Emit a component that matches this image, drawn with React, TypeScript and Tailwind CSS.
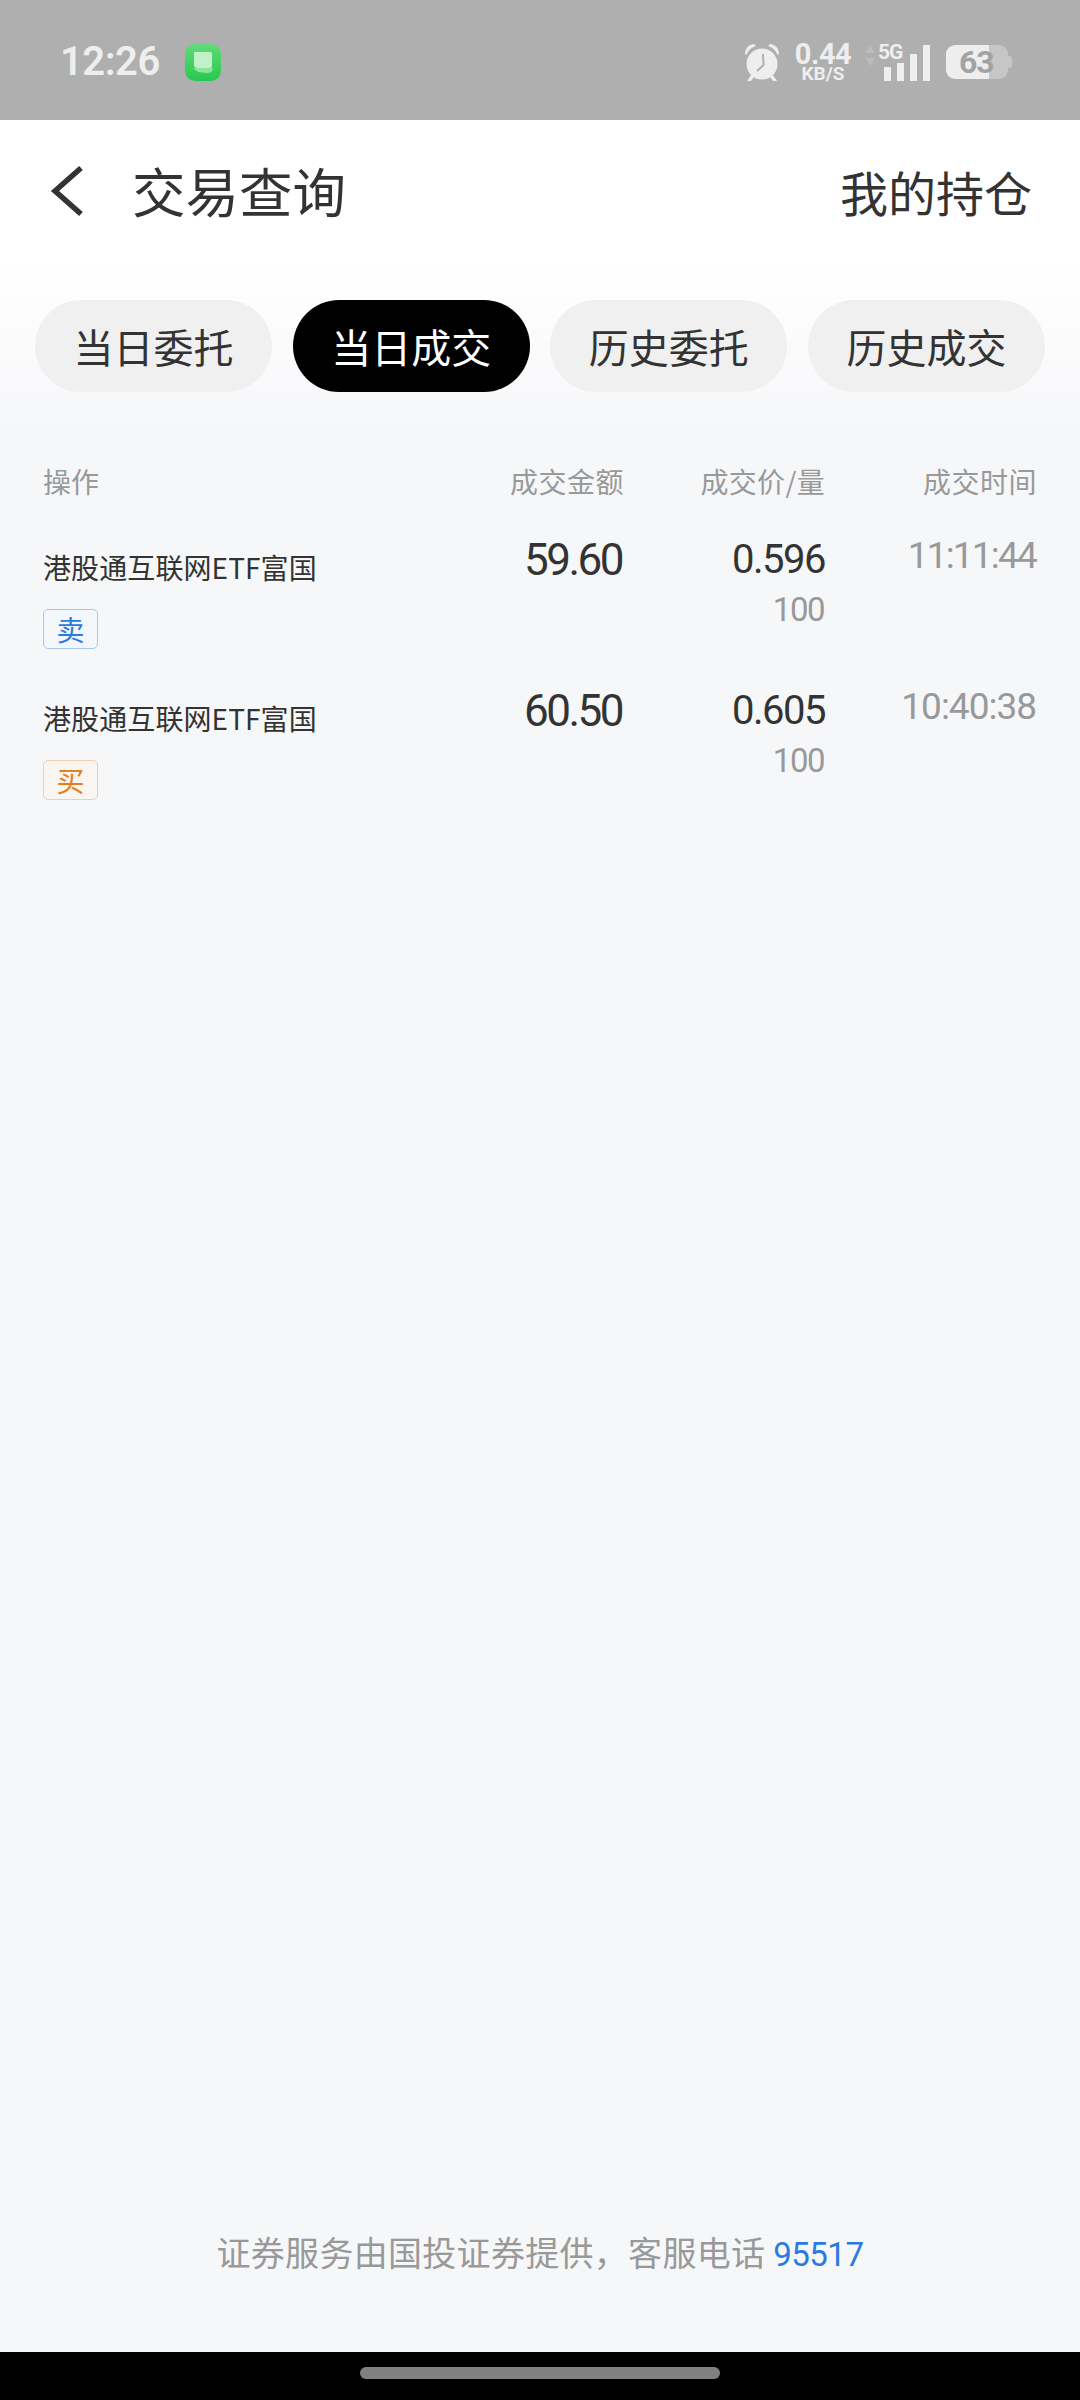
const cjk = { fontFamily: '"Noto Sans CJK SC", "Noto Sans", sans-serif' };
const num = { fontFamily: 'Roboto, "Liberation Sans", sans-serif' };

function Alarm() {
  return (
    <svg width="38" height="39" viewBox="0 0 38 39" className="shrink-0">
      <circle cx="19" cy="21" r="15.5" fill="#eeeeee" />
      <path d="M2 11 C2 5 6 1.500 11 1 L13 3 C8 4.500 5 8 3.500 12 Z" fill="#eeeeee" />
      <path d="M36 11 C36 5 32 1.500 27 1 L25 3 C30 4.500 33 8 34.500 12 Z" fill="#eeeeee" />
      <path d="M8 32 L4 38 H8 L11 34 Z M30 32 L34 38 H30 L27 34 Z" fill="#eeeeee" />
      <path d="M20 11 L20.500 22 L14 28" fill="none" stroke="#afafaf" strokeWidth="2" />
    </svg>
  );
}

function Signal() {
  return (
    <div className="relative w-[66px] h-[38px] shrink-0">
      <svg width="12" height="20" viewBox="0 0 12 20" className="absolute left-0 top-[3px]">
        <path d="M6 0 L11 7 H1 Z M6 20 L11 12 H1 Z" fill="#bcbcbc" />
      </svg>
      <span className="absolute left-[14px] top-[-3px] text-[21px] leading-[24px] font-bold text-[#eeeeee] tracking-[-1px]" style={num}>5G</span>
      <div className="absolute left-[20px] bottom-0 flex items-end gap-[6px]">
        <div className="w-[7px] h-[14px] bg-[#eeeeee]" />
        <div className="w-[7px] h-[18px] bg-[#eeeeee]" />
        <div className="w-[7px] h-[27px] bg-[#eeeeee]" />
        <div className="w-[7px] h-[36px] bg-[#eeeeee]" />
      </div>
    </div>
  );
}

function Battery() {
  return (
    <div className="relative w-[66px] h-[34px] shrink-0 flex">
      <div className="w-[43px] h-full bg-[#eeeeee] rounded-l-[9px]" />
      <div className="w-[19px] h-full bg-[#c6c6c6] rounded-r-[9px]" />
      <div className="w-[4px] h-[12px] self-center bg-[#c6c6c6] rounded-r-[3px]" />
      <span className="absolute left-[13px] top-0 text-[32px] leading-[34px] font-bold text-[#a3a3a3] tracking-[-1px]" style={num}>63</span>
    </div>
  );
}

function StatusBar() {
  return (
    <div className="h-[120px] bg-[#afafaf] flex items-center pl-[60px] pr-[68px] pt-[4px] shrink-0">
      <span className="text-[40px] leading-[48px] font-semibold text-[#eeeeee] tracking-[-0.5px]" style={num}>12:26</span>
      <svg width="36" height="37" viewBox="0 0 36 37" className="ml-[25px]">
        <defs>
          <linearGradient id="msg" x1="0" y1="0" x2="0" y2="1">
            <stop offset="0" stopColor="#5fdc7a" />
            <stop offset="1" stopColor="#26c94c" />
          </linearGradient>
        </defs>
        <rect width="36" height="37" rx="10" fill="url(#msg)" />
        <path d="M9 8 H25 Q27 8 27 10 V22 Q27 24 25 24 H20 L13 24 Q9 24 9 21 Z" fill="#c4f0c8" />
        <path d="M8 24 L28 24 Q28 29 22 29 L13 28 Z" fill="#8be59c" />
      </svg>
      <div className="ml-auto flex items-center">
        <Alarm />
        <div className="ml-[12px] w-[60px] flex flex-col items-center text-[#eeeeee]" style={num}>
          <div className="text-[29px] leading-[23px] font-bold tracking-[-0.5px]">0.44</div>
          <div className="text-[19px] leading-[16px] font-bold">KB/S</div>
        </div>
        <div className="ml-[11px]"><Signal /></div>
        <div className="ml-[16px]"><Battery /></div>
      </div>
    </div>
  );
}

function Header() {
  return (
    <div className="h-[142px] bg-white flex items-center pl-[50px] pr-[48px] shrink-0" style={cjk}>
      <svg width="34" height="52" viewBox="0 0 34 52" className="shrink-0">
        <path d="M31 3 L5 26 L31 49" fill="none" stroke="#333333" strokeWidth="5.500" />
      </svg>
      <span className="ml-[48px] mb-[2px] text-[53.500px] leading-[64px] text-[#333333]">交易查询</span>
      <span className="ml-auto text-[48px] leading-[60px] text-[#333333]">我的持仓</span>
    </div>
  );
}

function Tab({ label, active }: { label: string; active?: boolean }) {
  return (
    <div className={active
      ? "w-[237px] h-[92px] rounded-[46px] bg-black text-white flex items-center justify-center text-[40px]"
      : "w-[237px] h-[92px] rounded-[46px] bg-[#f0f0f0] text-[#333333] flex items-center justify-center text-[40px]"}>
      {label}
    </div>
  );
}

function Row({ amount, price, time, timeClass, side }: { amount: string; price: string; time: string; timeClass: string; side: "sell" | "buy" }) {
  return (
    <div className="flex h-[151px] pl-[43px] pr-[43px]">
      <div className="flex-1 flex flex-col items-start">
        <div className="mt-[15px] text-[28px] leading-[40px] text-[#333333] tracking-[0.1px]" style={cjk}>港股通互联网ETF富国</div>
        <div
          className={side === "sell"
            ? "mt-[22px] w-[55px] h-[40px] rounded-[5px] border border-[#a8c8ee] bg-[#f3f7fc] text-[#2a7ae2] text-[28px] leading-[38px] text-center"
            : "mt-[22px] w-[55px] h-[40px] rounded-[5px] border border-[#f2cdb0] bg-[#f9f5f1] text-[#e67e22] text-[28px] leading-[38px] text-center"}
          style={cjk}
        >
          {side === "sell" ? "卖" : "买"}
        </div>
      </div>
      <div className="mt-[3px] mr-[1px] text-[44px] leading-[50px] text-[#333333] text-right tracking-[-2.500px]" style={num}>{amount}</div>
      <div className="w-[202px] text-right" style={num}>
        <div className="mt-[3px] text-[40px] leading-[50px] text-[#333333] tracking-[-1.500px]">{price}</div>
        <div className="mt-[5px] mr-[1px] text-[33px] leading-[40px] text-[#999999] tracking-[-1.500px]">100</div>
      </div>
      <div className={timeClass} style={num}>{time}</div>
    </div>
  );
}

export default function App() {
  return (
    <div className="w-[1080px] h-[2400px] flex flex-col bg-[#f6f7f9] overflow-hidden" style={cjk}>
      <StatusBar />
      <Header />
      <div className="h-[170px] pt-[38px] pl-[35px] pr-[35px] flex justify-between shrink-0 bg-gradient-to-b from-white to-[#f6f7f9]">
        <Tab label="当日委托" />
        <Tab label="当日成交" active />
        <Tab label="历史委托" />
        <Tab label="历史成交" />
      </div>
      <div className="flex items-center h-[100px] pl-[43px] pr-[43px] pb-[2px] text-[28px] text-[#999999] shrink-0">
        <div className="flex-1">操作</div>
        <div className="tracking-[0.5px]">成交金额</div>
        <div className="w-[201px] text-right tracking-[0.3px]">成交价/量</div>
        <div className="w-[212px] text-right tracking-[0.5px]">成交时间</div>
      </div>
      <Row amount="59.60" price="0.596" time="11:11:44" timeClass="w-[211px] mr-[1px] mt-[2px] text-right text-[37px] leading-[44px] text-[#999999] tracking-[-1.800px]" side="sell" />
      <Row amount="60.50" price="0.605" time="10:40:38" timeClass="w-[211px] mr-[1px] mt-[2px] text-right text-[37px] leading-[44px] text-[#999999] tracking-[-1px]" side="buy" />
      <div className="mt-auto pb-[72px] text-center text-[34px] leading-[50px] text-[#999999] tracking-[0.3px]">
        证券服务由国投证券提供，客服电话 <span className="text-[#2a7ae2] tracking-[-0.5px] text-[33px]" style={num}>95517</span>
      </div>
      <div className="h-[48px] bg-black flex justify-center pt-[15px] shrink-0">
        <div className="w-[360px] h-[12px] rounded-full bg-[#808080]" />
      </div>
    </div>
  );
}
